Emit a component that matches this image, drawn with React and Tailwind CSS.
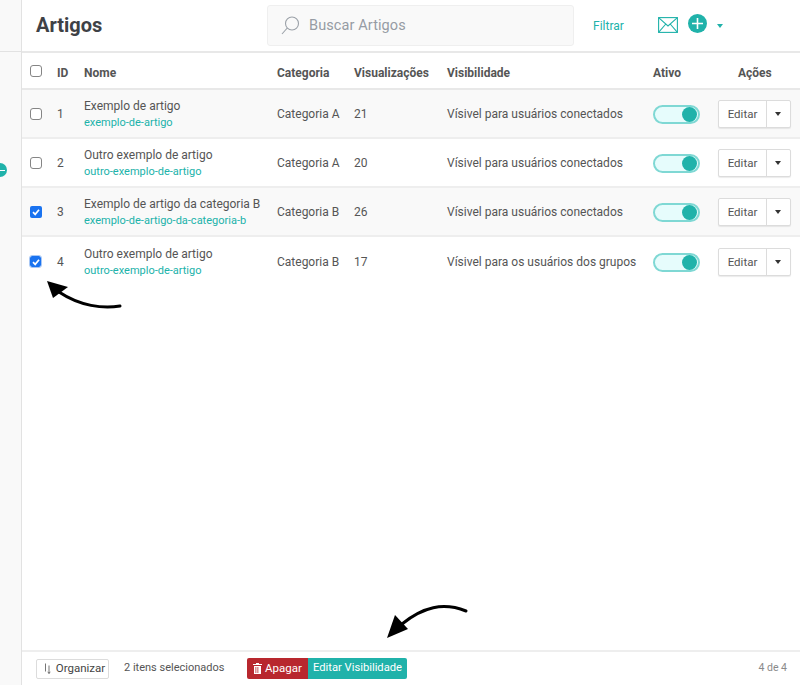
const rows = [
  { id: 1, name: "Exemplo de artigo", slug: "exemplo-de-artigo", cat: "Categoria A", views: 21, vis: "Vísivel para usuários conectados", checked: false },
  { id: 2, name: "Outro exemplo de artigo", slug: "outro-exemplo-de-artigo", cat: "Categoria A", views: 20, vis: "Vísivel para usuários conectados", checked: false },
  { id: 3, name: "Exemplo de artigo da categoria B", slug: "exemplo-de-artigo-da-categoria-b", cat: "Categoria B", views: 26, vis: "Vísivel para usuários conectados", checked: true },
  { id: 4, name: "Outro exemplo de artigo", slug: "outro-exemplo-de-artigo", cat: "Categoria B", views: 17, vis: "Vísivel para os usuários dos grupos", checked: true },
];
const grid = "grid grid-cols-[27px_27px_193px_77px_93px_206px_65px_82px] items-center pl-2";
const heads = ["ID", "Nome", "Categoria", "Visualizações", "Visibilidade", "Ativo"];

function Box({ checked, focus }) {
  if (checked) {
    return (
      <span className={`flex items-center justify-center rounded-[2px] bg-[#1a73f0] ${focus ? "h-[11px] w-[11px] outline-1 outline-[#a9c8f5]" : "h-3 w-3"}`}>
        <svg width="10" height="10" viewBox="0 0 10 10" fill="none"><path d="M2 5.2 4.2 7.4 8 2.8" stroke="#fff" strokeWidth="1.7" /></svg>
      </span>
    );
  }
  return <span className="block h-3 w-3 rounded-[3px] border border-[#858585] bg-white" />;
}

function Toggle() {
  return (
    <span className="mt-[1px] flex h-[19px] w-[47px] items-center justify-end rounded-full border-2 border-[#7fd8d4] bg-[#e6fcfc] pr-[1px]">
      <span className="h-[15px] w-[15px] rounded-full bg-[#20b2aa]" />
    </span>
  );
}

export default function App() {
  return (
    <div className="relative flex h-[685px] w-[800px] overflow-hidden bg-white font-['Roboto',sans-serif] text-[#555]">
      <aside className="relative w-[22px] shrink-0 border-r border-[#e2e2e2] bg-[#f9f9f9]">
        <div className="h-[52px] border-b border-[#e2e2e2]" />
        <span className="absolute left-[-7px] top-[163px] flex h-[14px] w-[14px] items-center justify-center rounded-full bg-[#20b2aa]">
          <span className="ml-[4px] h-[1px] w-[6px] bg-white" />
        </span>
      </aside>
      <main className="flex min-w-0 flex-1 flex-col">
        <header className="flex h-[53px] shrink-0 items-center border-b-2 border-[#e8e8e8] pl-[14px]">
          <h1 className="mb-[2px] w-[231px] text-[20px] font-bold text-[#3e4146]">Artigos</h1>
          <div className="flex h-[41px] w-[307px] items-center gap-[9px] rounded-[3px] border border-[#efefef] bg-[#f9f9f9] pl-[13px]">
            <svg width="19" height="19" viewBox="0 0 19 19" fill="none" stroke="#9ba1a8" strokeWidth="1.1">
              <circle cx="11" cy="7.5" r="6.5" />
              <path d="M6.3 12 1 18" />
            </svg>
            <span className="text-[14.5px] tracking-[0.1px] text-[#969ca4]">Buscar Artigos</span>
          </div>
          <span className="ml-[19px] text-[12px] text-[#20b2aa]">Filtrar</span>
          <svg className="mb-[1px] ml-[34px]" width="20" height="16" viewBox="0 0 20 16" fill="none" stroke="#20b2aa" strokeWidth="1.1">
            <rect x="0.6" y="0.6" width="18.8" height="14.8" />
            <path d="M0.6 0.6 10 9 19.4 0.6M0.6 15.4 7.8 7M19.4 15.4 12.2 7" />
          </svg>
          <span className="mb-[4px] ml-[10px] flex h-[19px] w-[19px] items-center justify-center rounded-full bg-[#20b2aa]">
            <svg width="11" height="11" viewBox="0 0 11 11" stroke="#fff" strokeWidth="1.6"><path d="M5.5 0v11M0 5.5h11" /></svg>
          </span>
          <span className="ml-[10px] mt-[1px] h-0 w-0 border-x-[3.5px] border-t-[4px] border-x-transparent border-t-[#20b2aa]" />
        </header>

        <div className={`${grid} h-[37px] shrink-0 border-b-2 border-[#e8e8e8] text-[12px] font-bold text-[#555]`}>
          <Box />
          {heads.map((h) => (
            <span key={h} className="pt-[5px]">{h}</span>
          ))}
          <span className="pl-[20px] pt-[5px]">Ações</span>
        </div>

        {rows.map((r) => (
          <div key={r.id} className={`${grid} h-[49px] shrink-0 text-[12px] ${r.id < 4 ? "border-b-2 border-[#eeeeee]" : ""} ${r.id % 2 ? "bg-[#f9f9f9]" : "bg-white"}`}>
            <Box checked={r.checked} focus={r.id === 4} />
            <span>{r.id}</span>
            <div className="flex flex-col gap-[1px] pt-[2px]">
              <span className="leading-[15px]">{r.name}</span>
              <span className="text-[11px] leading-[15px] text-[#20b2aa]">{r.slug}</span>
            </div>
            <span>{r.cat}</span>
            <span>{r.views}</span>
            <span className="whitespace-nowrap">{r.vis}</span>
            <Toggle />
            <div className="flex h-[28px] w-[73px] items-center rounded-[2px] border border-[#dcdcdc] bg-white text-[11.5px] shadow-[0_1px_1px_rgba(0,0,0,0.08)]">
              <span className="w-[48px] border-r border-[#dcdcdc] text-center leading-[26px]">Editar</span>
              <span className="ml-[8px] h-0 w-0 border-x-[3.5px] border-t-[4px] border-x-transparent border-t-[#333]" />
            </div>
          </div>
        ))}

        <div className="flex-1" />

        <footer className="flex h-[35px] shrink-0 items-center border-t-2 border-[#eeeeee] pl-[14px] pr-[13px]">
          <span className="flex h-[20px] w-[73px] items-center justify-center gap-[5px] rounded-[2px] border border-[#dcdcdc] pl-[4px] text-[11.5px] text-[#444]">
            <svg width="7" height="11" viewBox="0 0 7 11" fill="none" stroke="#666" strokeWidth="0.9"><path d="M1.5 0.5v8M5 2.5v8M3.8 8.8 5 10.5 6.2 8.8" /></svg>
            Organizar
          </span>
          <span className="mb-[1px] ml-[15px] w-[123px] text-[11px] text-[#555]">2 itens selecionados</span>
          <span className="flex h-[21px] w-[61px] items-center justify-center gap-[3px] rounded-l-[2px] bg-[#b8272e] text-[11.5px] text-white">
            <svg width="9" height="11" viewBox="0 0 9 11" fill="#fff"><path d="M3 0h3v1h3v1H0V1h3zM1 3h7v8H1zM2.5 4v6h.8V4zm2 0v6h.8V4z" fillRule="evenodd" /></svg>
            Apagar
          </span>
          <span className="flex h-[21px] w-[99px] items-center justify-center rounded-r-[2px] bg-[#20b2aa] text-[11.2px] text-white">Editar Visibilidade</span>
          <span className="mb-[1px] ml-auto text-[10.5px] text-[#8a8a8a]">4 de 4</span>
        </footer>
      </main>

      <svg className="absolute left-[45px] top-[280px]" width="78" height="32" viewBox="0 0 78 32" fill="none">
        <path d="M75 26C58 29 35 26 14 12" stroke="#000" strokeWidth="3" strokeLinecap="round" />
        <path d="M2 1 23 7 8 18Z" fill="#000" />
      </svg>
      <svg className="absolute left-[385px] top-[602px]" width="84" height="38" viewBox="0 0 84 38" fill="none">
        <path d="M81 9C58 0 38 5 17 22" stroke="#000" strokeWidth="3" strokeLinecap="round" />
        <path d="M2 36 10 13 23 27Z" fill="#000" />
      </svg>
    </div>
  );
}
